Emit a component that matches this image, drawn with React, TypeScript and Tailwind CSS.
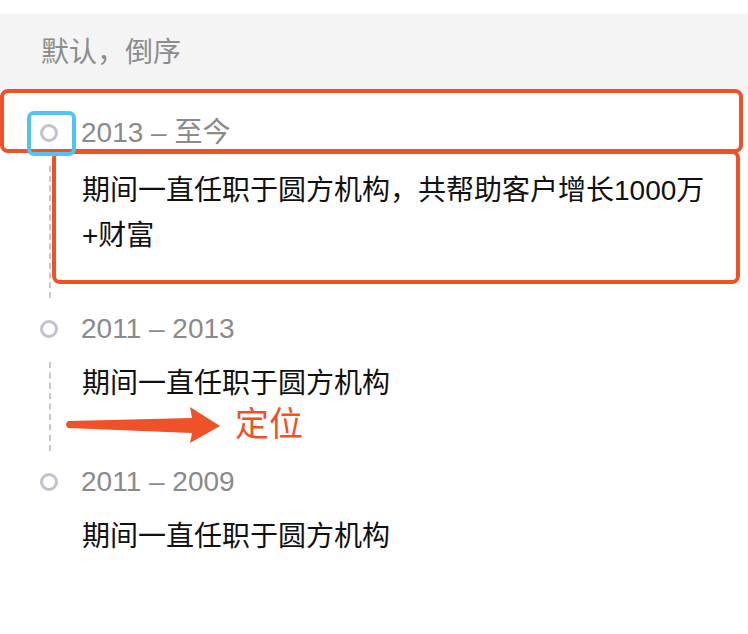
import React from 'react';

const items = [
  { title: '2013 – 至今', lines: ['期间一直任职于圆方机构，共帮助客户增长1000万', '+财富'], mt: 'mt-[15px]', pb: 'pb-[51px]', tail: true },
  { title: '2011 – 2013', lines: ['期间一直任职于圆方机构'], mt: 'mt-[12px]', pb: 'pb-[56px]', tail: true },
  { title: '2011 – 2009', lines: ['期间一直任职于圆方机构'], mt: 'mt-[12px]', pb: 'pb-0', tail: false },
];

export default function App() {
  return (
    <div
      className="relative w-[748px] h-[634px] bg-white overflow-hidden"
      style={{ fontFamily: '"Liberation Sans", "Noto Sans CJK SC", sans-serif' }}
    >
      <div className="h-[14px]" />
      <div className="h-[78px] bg-[#f4f4f4] flex items-center pl-[41px] text-[28px] text-[#8c8c8c]">
        默认，倒序
      </div>

      <ul className="pl-[40px] pt-[21px]">
        {items.map((item) => (
          <li key={item.title} className={`relative ${item.pb}`}>
            {item.tail && (
              <div className="absolute left-[9px] top-[53px] bottom-[11px] border-l-2 border-dashed border-[#c4c6d2]" />
            )}
            <div className="flex items-center h-[40px]">
              <span className="w-[18px] h-[18px] rounded-full border-[3px] border-[#c0c3cf]" />
              <span className="ml-[23px] text-[28px] text-[#8a8a8a]">{item.title}</span>
            </div>
            <div className={`${item.mt} pl-[42px] text-[28px] leading-[45px] text-[#111]`}>
              {item.lines.map((l) => (
                <div key={l}>{l}</div>
              ))}
            </div>
          </li>
        ))}
      </ul>

      {/* annotation overlays */}
      <div className="absolute left-0 top-[89px] w-[743px] h-[64px] border-4 border-[#ef5228] rounded-[8px]" />
      <div className="absolute left-[52px] top-[150px] w-[688px] h-[134px] border-4 border-[#ef5228] rounded-[8px]" />
      <div className="absolute left-[27px] top-[111px] w-[49px] h-[45px] border-4 border-[#52c3f7] rounded-[7px]" />

      <svg className="absolute left-0 top-0 pointer-events-none" width="748" height="634">
        <path
          d="M68 421 L192 418 L190 407 L220 426 L190 443 L192 433 L68 428 Q64 424.5 68 421 Z"
          fill="#ef5228"
        />
      </svg>
      <div className="absolute left-[235px] top-[401px] text-[34px] leading-[46px] text-[#ef5228]">定位</div>
    </div>
  );
}
